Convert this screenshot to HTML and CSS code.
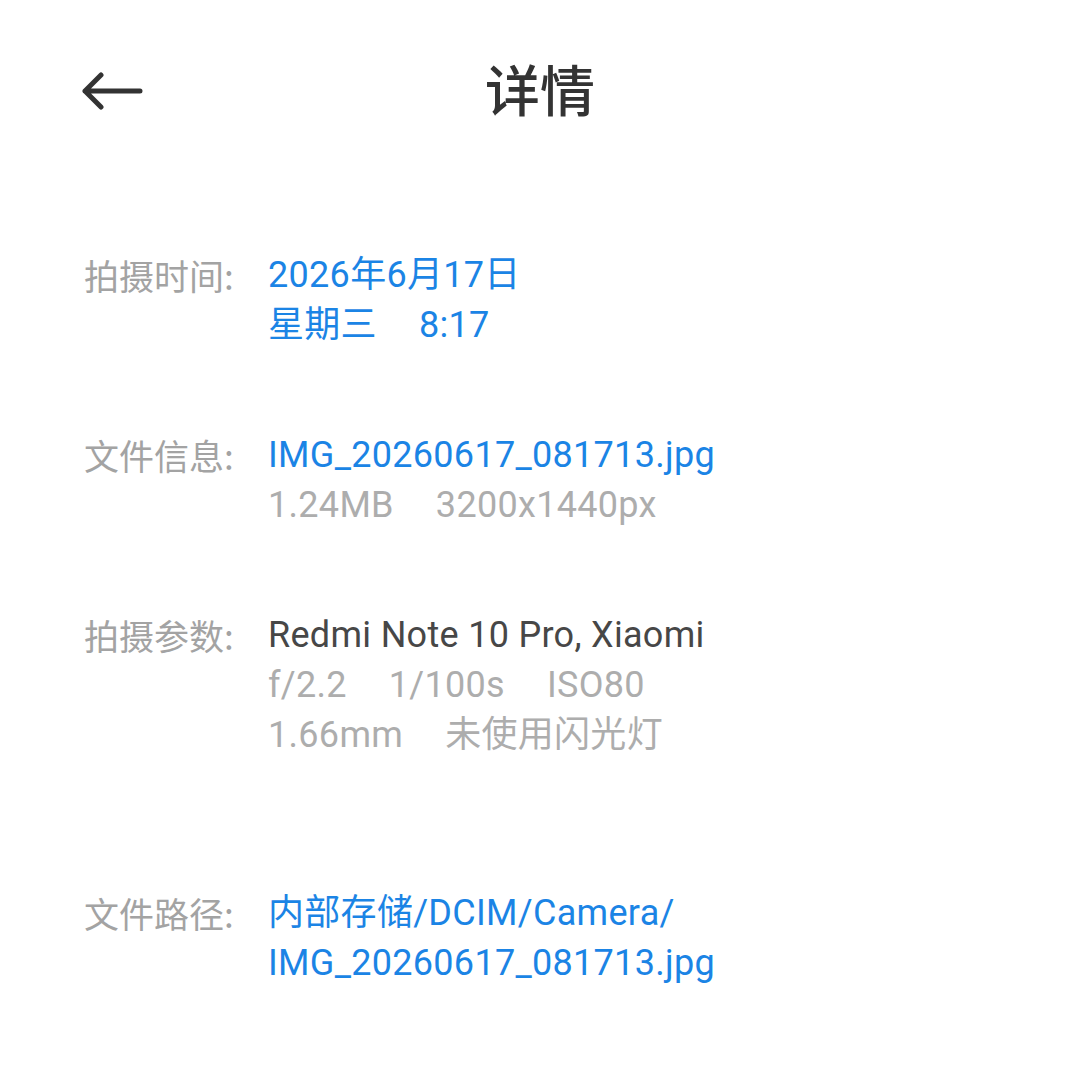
FILE: index.html
```html
<!DOCTYPE html>
<html lang="zh-CN">
<head>
<meta charset="utf-8">
<title>详情</title>
<link rel="stylesheet" href="styles.css">
</head>
<body>
<div class="page">
  <header class="header">
    <div class="back">
      <svg width="64" height="48" viewBox="0 0 64 48">
        <path d="M3 20 L58 20 M3 20 L19 4 M3 20 L19 36" fill="none" stroke="#333333" stroke-width="5" stroke-linecap="round" stroke-linejoin="round"/>
      </svg>
    </div>
    <h1 class="title">详情</h1>
  </header>
  <main class="list">
    <div class="row">
      <div class="label">拍摄时间:</div>
      <div class="value">
        <div class="line blue">2026年6月17日</div>
        <div class="line blue"><span class="gap">星期三</span><span>8:17</span></div>
      </div>
    </div>
    <div class="row">
      <div class="label">文件信息:</div>
      <div class="value">
        <div class="line blue">IMG_20260617_081713.jpg</div>
        <div class="line gray"><span class="gap">1.24MB</span><span>3200x1440px</span></div>
      </div>
    </div>
    <div class="row">
      <div class="label">拍摄参数:</div>
      <div class="value">
        <div class="line dark">Redmi Note 10 Pro, Xiaomi</div>
        <div class="line gray"><span class="gap">f/2.2</span><span class="gap">1/100s</span><span>ISO80</span></div>
        <div class="line gray"><span class="gap">1.66mm</span><span>未使用闪光灯</span></div>
      </div>
    </div>
    <div class="row row-path">
      <div class="label">文件路径:</div>
      <div class="value">
        <div class="line blue">内部存储/DCIM/Camera/</div>
        <div class="line blue">IMG_20260617_081713.jpg</div>
      </div>
    </div>
  </main>
</div>
</body>
</html>
```
FILE: styles.css
```css
html, body {
  margin: 0;
  padding: 0;
  background: #ffffff;
}
body {
  font-family: Roboto, "Noto Sans CJK SC", sans-serif;
  width: 1080px;
  height: 1079px;
  overflow: hidden;
}
.page {
  display: flex;
  flex-direction: column;
}
.header {
  position: relative;
  height: 184px;
  display: flex;
  align-items: center;
  justify-content: center;
}
.back {
  position: absolute;
  left: 82px;
  top: 71px;
  width: 64px;
  height: 48px;
}
.back svg {
  display: block;
}
.title {
  margin: 0 0 10px 0;
  font-family: "Noto Sans CJK SC", sans-serif;
  font-size: 55px;
  font-weight: 500;
  color: #333333;
  line-height: 1;
}
.list {
  margin-top: 66px;
  padding-left: 84px;
  display: flex;
  flex-direction: column;
  gap: 80px;
}
.row {
  display: flex;
  align-items: flex-start;
}
.row-path {
  margin-top: 48px;
}
.label {
  width: 184px;
  flex: none;
  font-size: 35px;
  line-height: 50px;
  color: #a3a3a3;
  font-family: "Noto Sans CJK SC", sans-serif;
}
.value {
  display: flex;
  flex-direction: column;
}
.line {
  font-size: 36px;
  line-height: 50px;
  letter-spacing: 0.3px;
  white-space: nowrap;
  font-weight: 400;
}
.gap {
  margin-right: 42px;
}
.blue { color: #1b84e5; }
.gray { color: #adadad; }
.dark { color: #474747; }
```
